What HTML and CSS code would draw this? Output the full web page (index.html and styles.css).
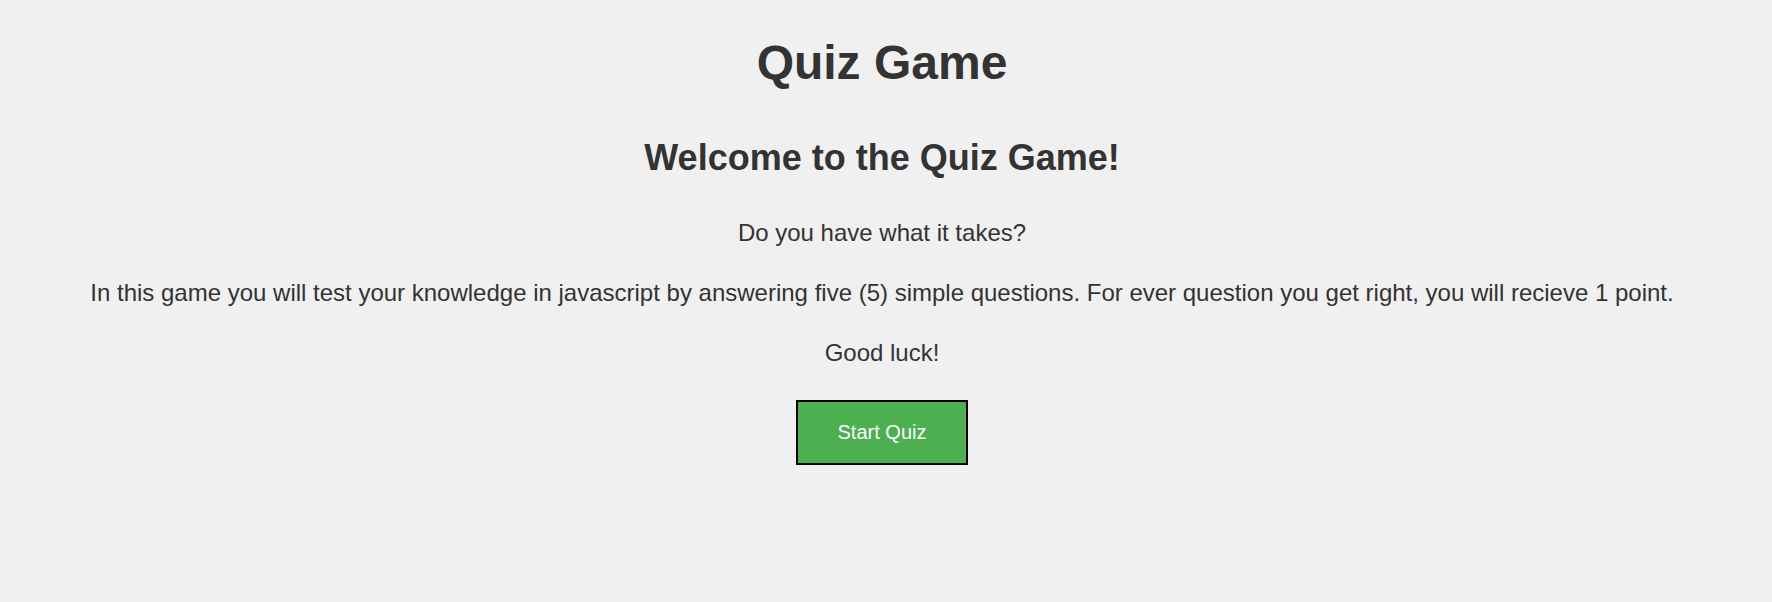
FILE: index.html
```html
<!DOCTYPE html>
<html lang="en">
<head>
<meta charset="utf-8">
<title>Quiz Game</title>
<link rel="stylesheet" href="styles.css">
</head>
<body>
<div class="page">
  <h1 class="title">Quiz Game</h1>
  <section class="intro">
    <h2 class="subtitle">Welcome to the Quiz Game!</h2>
    <p class="text">Do you have what it takes?</p>
    <p class="text">In this game you will test your knowledge in javascript by answering five (5) simple questions. For ever question you get right, you will recieve 1 point.</p>
    <p class="text">Good luck!</p>
    <button class="start-btn" type="button">Start Quiz</button>
  </section>
</div>
</body>
</html>
```

FILE: styles.css
```css
html, body {
  margin: 0;
  padding: 0;
  background: #f0f0f0;
}

body {
  font-family: "Liberation Sans", Arial, sans-serif;
  color: #333333;
  font-size: 24px;
  line-height: 1.5;
}

.page {
  padding: 0 8px 0 0;
  text-align: center;
  overflow: hidden;
}

.title {
  font-size: 48px;
  font-weight: bold;
  margin: 27px 0 32px;
}

.subtitle {
  font-size: 36px;
  font-weight: bold;
  margin: 32px 0 30px;
}

.text {
  margin: 24px 0;
}

.start-btn {
  display: block;
  margin: 29px auto 0;
  font-family: "Liberation Sans", Arial, sans-serif;
  font-size: 20px;
  line-height: 23px;
  color: #ffffff;
  background: #4caf50;
  border: 2px solid #000000;
  padding: 19px 40px;
  cursor: pointer;
}
```
